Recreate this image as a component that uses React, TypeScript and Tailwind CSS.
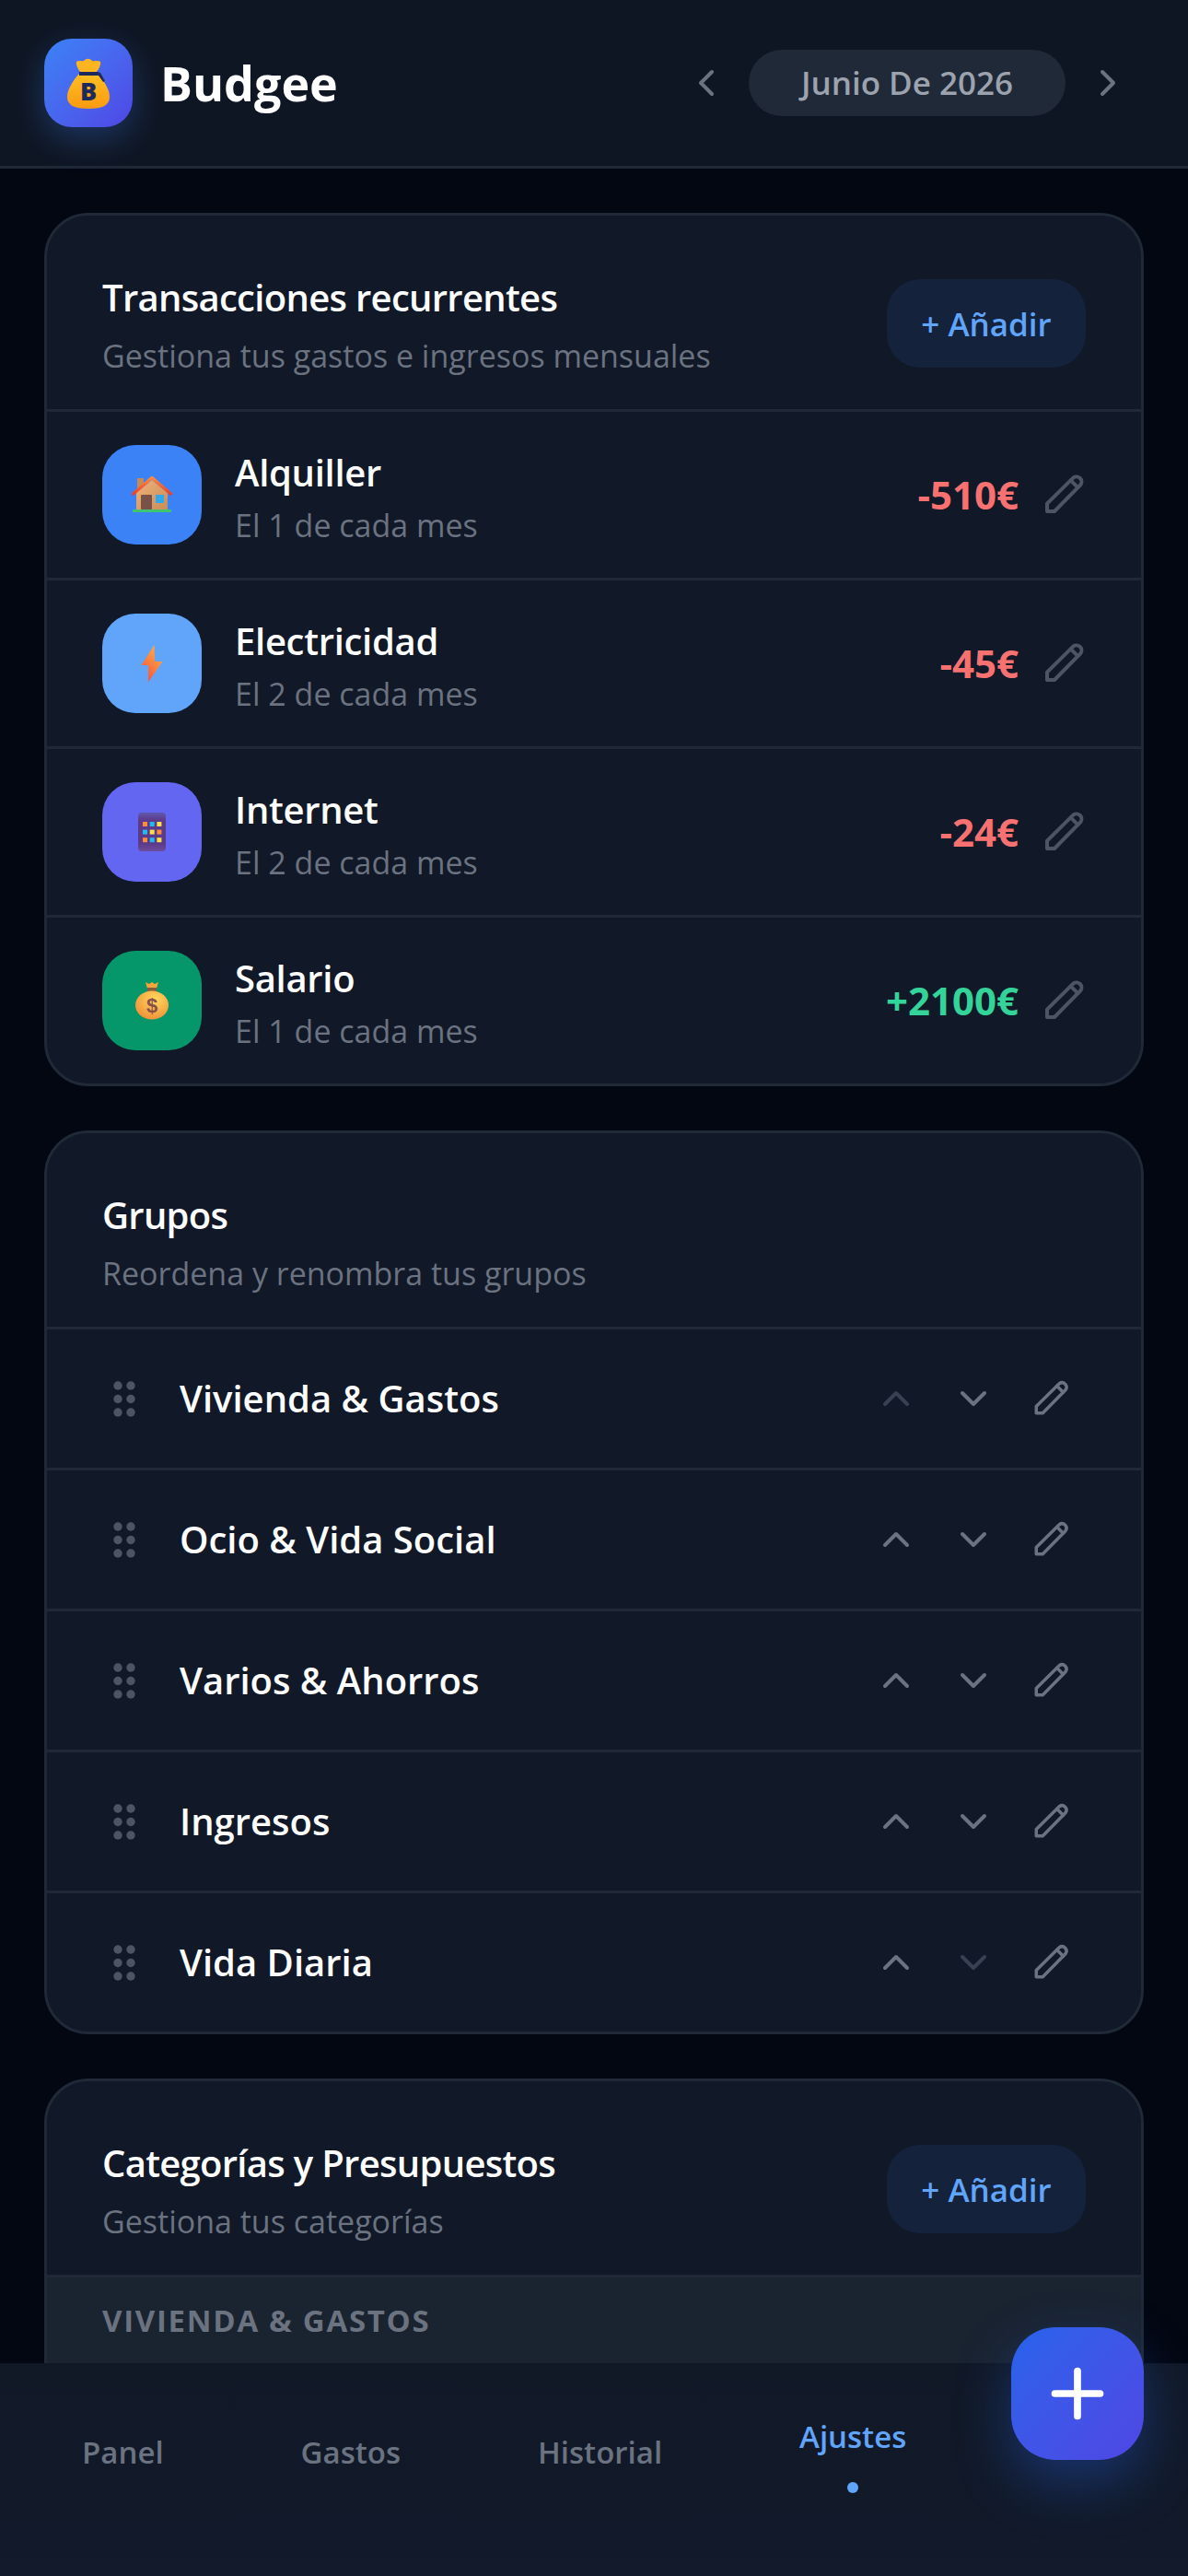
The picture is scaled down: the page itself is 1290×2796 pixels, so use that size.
import { ChevronLeft, ChevronRight, ChevronUp, ChevronDown, Plus } from 'lucide-react'

const font = { fontFamily: '"Open Sans", "Noto Sans", sans-serif' }

function PencilIcon({ className }: { className: string }) {
  return (
    <svg className={className} viewBox="0 0 24 24" fill="none" stroke="currentColor" strokeWidth="2" strokeLinecap="round" strokeLinejoin="round">
      <path d="M3 21v-4.200L17.300 2.700a2.800 2.800 0 0 1 3.900 3.900L7 21z" />
      <path d="m15.800 4.200 3.900 3.900" />
    </svg>
  )
}

function GripIcon() {
  return (
    <svg className="ml-[12px] text-[#4b5563]" width="24" height="39" viewBox="0 0 24 39" fill="currentColor">
      <circle cx="5" cy="5" r="4.700" />
      <circle cx="19" cy="5" r="4.700" />
      <circle cx="5" cy="19.500" r="4.700" />
      <circle cx="19" cy="19.500" r="4.700" />
      <circle cx="5" cy="34" r="4.700" />
      <circle cx="19" cy="34" r="4.700" />
    </svg>
  )
}

function HouseIcon() {
  return (
    <svg width="44" height="44" viewBox="0 0 44 44">
      <defs>
        <linearGradient id="wall" x1="0" y1="0" x2="1" y2="1">
          <stop offset="0" stopColor="#f0b27a" />
          <stop offset="1" stopColor="#c98d58" />
        </linearGradient>
        <linearGradient id="roof" x1="0" y1="0" x2="0" y2="1">
          <stop offset="0" stopColor="#ff8a3c" />
          <stop offset="1" stopColor="#e8402f" />
        </linearGradient>
      </defs>
      <rect x="6" y="4" width="7" height="18" fill="#c78b57" />
      <path d="M5 20 22 6l17 14v18H5z" fill="url(#wall)" />
      <path d="M1.500 21 22 3.500 42.500 21" fill="none" stroke="url(#roof)" strokeWidth="3.500" strokeLinecap="round" strokeLinejoin="round" />
      <rect x="10" y="22" width="12" height="16" rx="1" fill="#7a5148" />
      <rect x="26" y="22" width="9" height="9" fill="#2fa8f0" />
      <rect y="38" width="42" height="3" x="1" fill="#3fc56f" />
    </svg>
  )
}

function BoltIcon() {
  return (
    <svg width="24" height="42" viewBox="0 0 24 42">
      <defs>
        <linearGradient id="bolt" x1="0.8" y1="0" x2="0.2" y2="1">
          <stop offset="0" stopColor="#ffb347" />
          <stop offset="1" stopColor="#f2503c" />
        </linearGradient>
      </defs>
      <path d="M14.500 1 0.500 23h7.500v18.500L23.500 19H15z" fill="url(#bolt)" />
    </svg>
  )
}

function PhoneIcon() {
  const colors = ['#fb8c3a', '#26b8f0', '#fde047', '#26b8f0', '#fde047', '#fb8c3a', '#fb8c3a', '#26b8f0', '#fde047']
  return (
    <svg width="30" height="42" viewBox="0 0 30 42">
      <defs>
        <linearGradient id="phone" x1="0" y1="0" x2="0" y2="1">
          <stop offset="0" stopColor="#5f58ac" />
          <stop offset="0.2" stopColor="#5c3a8a" />
          <stop offset="0.8" stopColor="#5c3a8a" />
          <stop offset="1" stopColor="#6c4c9c" />
        </linearGradient>
      </defs>
      <rect width="30" height="42" rx="4" fill="url(#phone)" />
      {colors.map((c, i) => (
        <rect key={i} x={5 + (i % 3) * 7.7} y={10 + Math.floor(i / 3) * 8.6} width="5" height="5" fill={c} />
      ))}
    </svg>
  )
}

function SalaryIcon() {
  return (
    <svg width="36" height="42" viewBox="0 0 36 42">
      <defs>
        <radialGradient id="sal" cx="0.6" cy="0.3" r="0.8">
          <stop offset="0" stopColor="#ffd85c" />
          <stop offset="1" stopColor="#ee8a35" />
        </radialGradient>
      </defs>
      <path d="M11 1l4 2 3-2 3 2 4-2-2 7h-10z" fill="#f4a63a" />
      <rect x="13" y="7" width="10" height="5" fill="#8a5a3c" />
      <ellipse cx="18" cy="26" rx="18" ry="15.500" fill="url(#sal)" />
      <text x="18" y="34" textAnchor="middle" fontSize="22" fontWeight="700" fill="#8a4f4a" fontFamily="Liberation Sans, sans-serif">$</text>
    </svg>
  )
}

function LogoBag() {
  return (
    <svg width="46" height="56" viewBox="0 0 46 56">
      <defs>
        <linearGradient id="bag" x1="0" y1="0" x2="0" y2="1">
          <stop offset="0" stopColor="#ffc022" />
          <stop offset="1" stopColor="#fb9a10" />
        </linearGradient>
      </defs>
      <path d="M10 5c3-2 6 0 8-1 3-3 6-3 9 0 3 1 6-1 9 1 1 4-3 10-5 12H15C13 15 9 9 10 5z" fill="#ffb51f" />
      <path d="M14 17h18c6 6 14 17 14 26 0 9-7 13-23 13S0 52 0 43c0-9 8-20 14-26z" fill="url(#bag)" />
      <path d="M13 16h20l3 1 5 9-2 1-5-7H13z" fill="#1e2a5c" />
      <text x="23" y="47" textAnchor="middle" fontSize="27" fontWeight="800" fill="#1e2a5c" style={font}>B</text>
    </svg>
  )
}

type Recurring = { name: string; when: string; amount: string; color: string; bg: string; icon: React.ReactNode }

const recurring: Recurring[] = [
  { name: 'Alquiller', when: 'El 1 de cada mes', amount: '-510€', color: 'text-[#f87171]', bg: 'bg-[#3b82f6]', icon: <HouseIcon /> },
  { name: 'Electricidad', when: 'El 2 de cada mes', amount: '-45€', color: 'text-[#f87171]', bg: 'bg-[#60a5fa]', icon: <BoltIcon /> },
  { name: 'Internet', when: 'El 2 de cada mes', amount: '-24€', color: 'text-[#f87171]', bg: 'bg-[#6366f1]', icon: <PhoneIcon /> },
  { name: 'Salario', when: 'El 1 de cada mes', amount: '+2100€', color: 'text-[#34d399]', bg: 'bg-[#059669]', icon: <SalaryIcon /> },
]

const groups = ['Vivienda & Gastos', 'Ocio & Vida Social', 'Varios & Ahorros', 'Ingresos', 'Vida Diaria']

function CardHeader({ title, subtitle, add }: { title: string; subtitle: string; add?: boolean }) {
  return (
    <div className="flex h-[213px] items-start justify-between border-b-[3px] border-[#1f2937] pl-[60px] pr-[60px] pt-[59px]">
      <div>
        <h2 className="text-[40px] leading-[60px] font-semibold tracking-[-0.7px] text-white">{title}</h2>
        <p className="mt-[6px] text-[34px] leading-[54px] text-[#6b7280]">{subtitle}</p>
      </div>
      {add && (
        <button className="mt-[10px] flex h-[96px] w-[216px] items-center justify-center rounded-[36px] bg-[#14223c] pt-[2px] text-[35px] font-semibold text-[#60a5fa]">
          + Añadir
        </button>
      )}
    </div>
  )
}

function RecurringRow({ item, last }: { item: Recurring; last: boolean }) {
  return (
    <div className={`flex items-center pl-[60px] pr-[60px] ${last ? 'h-[180px]' : 'h-[183px] border-b-[3px] border-[#1f2937]'}`}>
      <div className={`flex h-[108px] w-[108px] items-center justify-center rounded-[36px] ${item.bg}`}>{item.icon}</div>
      <div className="ml-[36px] mt-[6px] flex-1">
        <div className="text-[40px] leading-[60px] font-semibold tracking-[-0.3px] text-white">{item.name}</div>
        <div className="text-[34px] leading-[54px] text-[#6b7280]">{item.when}</div>
      </div>
      <div className={`-mt-[2px] text-[42px] font-bold ${item.color}`}>{item.amount}</div>
      <PencilIcon className="ml-[25px] h-[48px] w-[48px] text-[#4b5563]" />
    </div>
  )
}

function GroupRow({ name, index }: { name: string; index: number }) {
  const first = index === 0
  const last = index === groups.length - 1
  return (
    <div className={`flex items-center pl-[60px] pr-[62px] ${last ? 'h-[150px]' : 'h-[153px] border-b-[3px] border-[#1f2937]'}`}>
      <GripIcon />
      <div className="ml-[48px] flex-1 text-[40px] font-semibold text-white">{name}</div>
      <div className="flex gap-[12px]">
        <div className="flex h-[72px] w-[72px] items-center justify-center">
          <ChevronUp className={`h-[48px] w-[48px] ${first ? 'text-[#374151]' : 'text-[#6b7280]'}`} />
        </div>
        <div className="flex h-[72px] w-[72px] items-center justify-center">
          <ChevronDown className={`h-[48px] w-[48px] ${last ? 'text-[#374151]' : 'text-[#6b7280]'}`} />
        </div>
        <div className="flex h-[72px] w-[72px] items-center justify-center">
          <PencilIcon className="h-[42px] w-[42px] text-[#6b7280]" />
        </div>
      </div>
    </div>
  )
}

function Card({ children }: { children: React.ReactNode }) {
  return <section className="shrink-0 overflow-hidden rounded-[48px] border-[3px] border-[#1f2937] bg-[#111827]">{children}</section>
}

export default function App() {
  return (
    <div className="relative flex h-[2796px] w-[1290px] flex-col overflow-hidden bg-[#030712]" style={font}>
      <header className="box-content flex h-[180px] shrink-0 items-center justify-between border-b-[3px] border-[#1f2937] bg-[#0f1623] pl-[48px] pr-[63px]">
        <div className="flex items-center gap-[30px]">
          <div className="flex h-[96px] w-[96px] items-center justify-center rounded-[30px] bg-gradient-to-br from-[#3b82f6] to-[#4f46e5] shadow-[0_12px_36px_rgba(59,130,246,0.3)]">
            <LogoBag />
          </div>
          <h1 className="text-[52px] font-bold text-white">Budgee</h1>
        </div>
        <div className="flex items-center gap-[22px]">
          <ChevronLeft className="h-[48px] w-[48px] text-[#6b7280]" />
          <div className="flex h-[72px] w-[344px] items-center justify-center rounded-full bg-[#1f2937] text-[35px] font-semibold text-[#9ca3af]">
            Junio De 2026
          </div>
          <ChevronRight className="h-[48px] w-[48px] text-[#6b7280]" />
        </div>
      </header>

      <main className="flex flex-1 flex-col gap-[48px] overflow-hidden px-[48px] pt-[48px]">
        <Card>
          <CardHeader title="Transacciones recurrentes" subtitle="Gestiona tus gastos e ingresos mensuales" add />
          {recurring.map((item, i) => (
            <RecurringRow key={item.name} item={item} last={i === recurring.length - 1} />
          ))}
        </Card>
        <Card>
          <CardHeader title="Grupos" subtitle="Reordena y renombra tus grupos" />
          {groups.map((g, i) => (
            <GroupRow key={g} name={g} index={i} />
          ))}
        </Card>
        <Card>
          <CardHeader title="Categorías y Presupuestos" subtitle="Gestiona tus categorías" add />
          <div className="h-[144px] bg-[#1a2330] pl-[60px] pt-[23px] text-[33px] leading-[48px] font-bold tracking-[1.7px] text-[#6b7280]">VIVIENDA & GASTOS</div>
        </Card>
      </main>

      <nav className="flex h-[231px] shrink-0 items-start gap-[149px] border-t-[3px] border-[#101826] bg-gradient-to-b from-[#111927] to-[#121a2b] pl-[89px] pt-[62px] text-[33px] font-semibold text-[#6b7280]">
        <span className="mt-[7px]">Panel</span>
        <span className="mt-[7px]">Gastos</span>
        <span className="mt-[7px]">Historial</span>
        <span className="flex flex-col items-center text-[#60a5fa]">
          <span className="-mt-[10px]">Ajustes</span>
          <span className="mt-[24px] h-[12px] w-[12px] rounded-full bg-[#60a5fa]" />
        </span>
      </nav>

      <button className="absolute left-[1098px] top-[2526px] flex h-[144px] w-[144px] items-center justify-center rounded-[48px] bg-gradient-to-br from-[#2563eb] to-[#4f46e5] text-white shadow-[0_24px_60px_rgba(37,99,235,0.35)]">
        <Plus className="h-[84px] w-[84px]" strokeWidth={2.2} />
      </button>
    </div>
  )
}
